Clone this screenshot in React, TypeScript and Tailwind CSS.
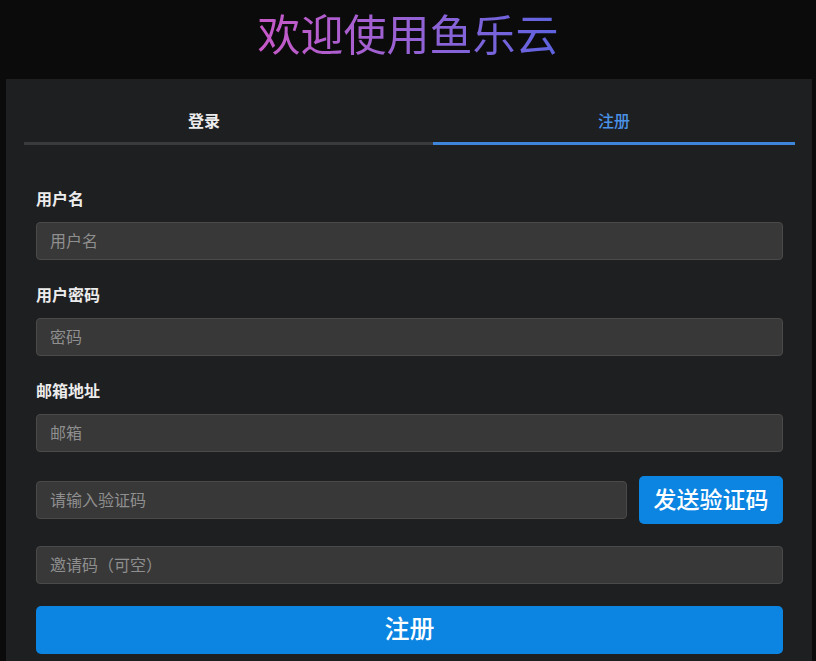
import { useState } from "react";

const font = "font-['Inter','Noto_Sans_CJK_SC',sans-serif]";

function Field({ label, placeholder }: { label: string; placeholder: string }) {
  return (
    <div className="mb-6">
      <div className="h-[22px] leading-[22px] mb-3 text-base font-bold text-[#ececec]">{label}</div>
      <input
        placeholder={placeholder}
        className="w-full h-[38px] px-[13px] rounded-[4px] bg-[#383838] border border-[#4a4a4a] text-base text-[#e5e5e5] placeholder:text-[#8f8f8f] outline-none"
      />
    </div>
  );
}

export default function App() {
  const [tab, setTab] = useState<"login" | "register">("register");

  return (
    <div className={`min-h-screen bg-[#0b0b0c] ${font}`}>
      {/* Title */}
      <div className="h-[79px] flex items-center justify-center pb-2">
        <h1 className="text-[43px] leading-none bg-gradient-to-r from-[#c858c8] to-[#5d63e0] bg-clip-text text-transparent">
          欢迎使用鱼乐云
        </h1>
      </div>

      {/* Card */}
      <div className="ml-[6px] mr-[4px] bg-[#1e1f21] pt-[21px] pl-[18px] pr-[17px] pb-6">
        {/* Tabs */}
        <div className="flex border-b-[3px] border-[#3a3b3d]">
          <button
            onClick={() => setTab("login")}
            className={`w-[360px] h-[45px] -mb-[3px] border-b-[3px] text-base font-bold ${
              tab === "login" ? "border-[#3d86dc] text-[#4a92e6]" : "border-transparent text-[#ececec]"
            }`}
          >
            登录
          </button>
          <button
            onClick={() => setTab("register")}
            className={`ml-auto w-[362px] h-[45px] -mb-[3px] border-b-[3px] text-base font-medium ${
              tab === "register" ? "border-[#3d86dc] text-[#4a92e6]" : "border-transparent text-[#ececec] font-bold"
            }`}
          >
            注册
          </button>
        </div>

        {/* Form */}
        <div className="px-3 mt-[43px]">
          <Field label="用户名" placeholder="用户名" />
          <Field label="用户密码" placeholder="密码" />
          <Field label="邮箱地址" placeholder="邮箱" />

          <div className="flex items-center gap-3 mt-[21px]">
            <input
              placeholder="请输入验证码"
              className="flex-1 h-[38px] px-[13px] rounded-[4px] bg-[#383838] border border-[#4a4a4a] text-base text-[#e5e5e5] placeholder:text-[#8f8f8f] outline-none"
            />
            <button className="w-[144px] h-[48px] rounded-[5px] bg-[#0b84e2] text-white text-[23px] font-medium">
              发送验证码
            </button>
          </div>

          <input
            placeholder="邀请码（可空）"
            className="mt-[22px] w-full h-[38px] px-[13px] rounded-[4px] bg-[#383838] border border-[#4a4a4a] text-base text-[#e5e5e5] placeholder:text-[#8f8f8f] outline-none"
          />

          <button className="mt-[22px] w-full h-[48px] rounded-[5px] bg-[#0b84e2] text-white text-[25px] font-medium">
            注册
          </button>
        </div>
      </div>
    </div>
  );
}
